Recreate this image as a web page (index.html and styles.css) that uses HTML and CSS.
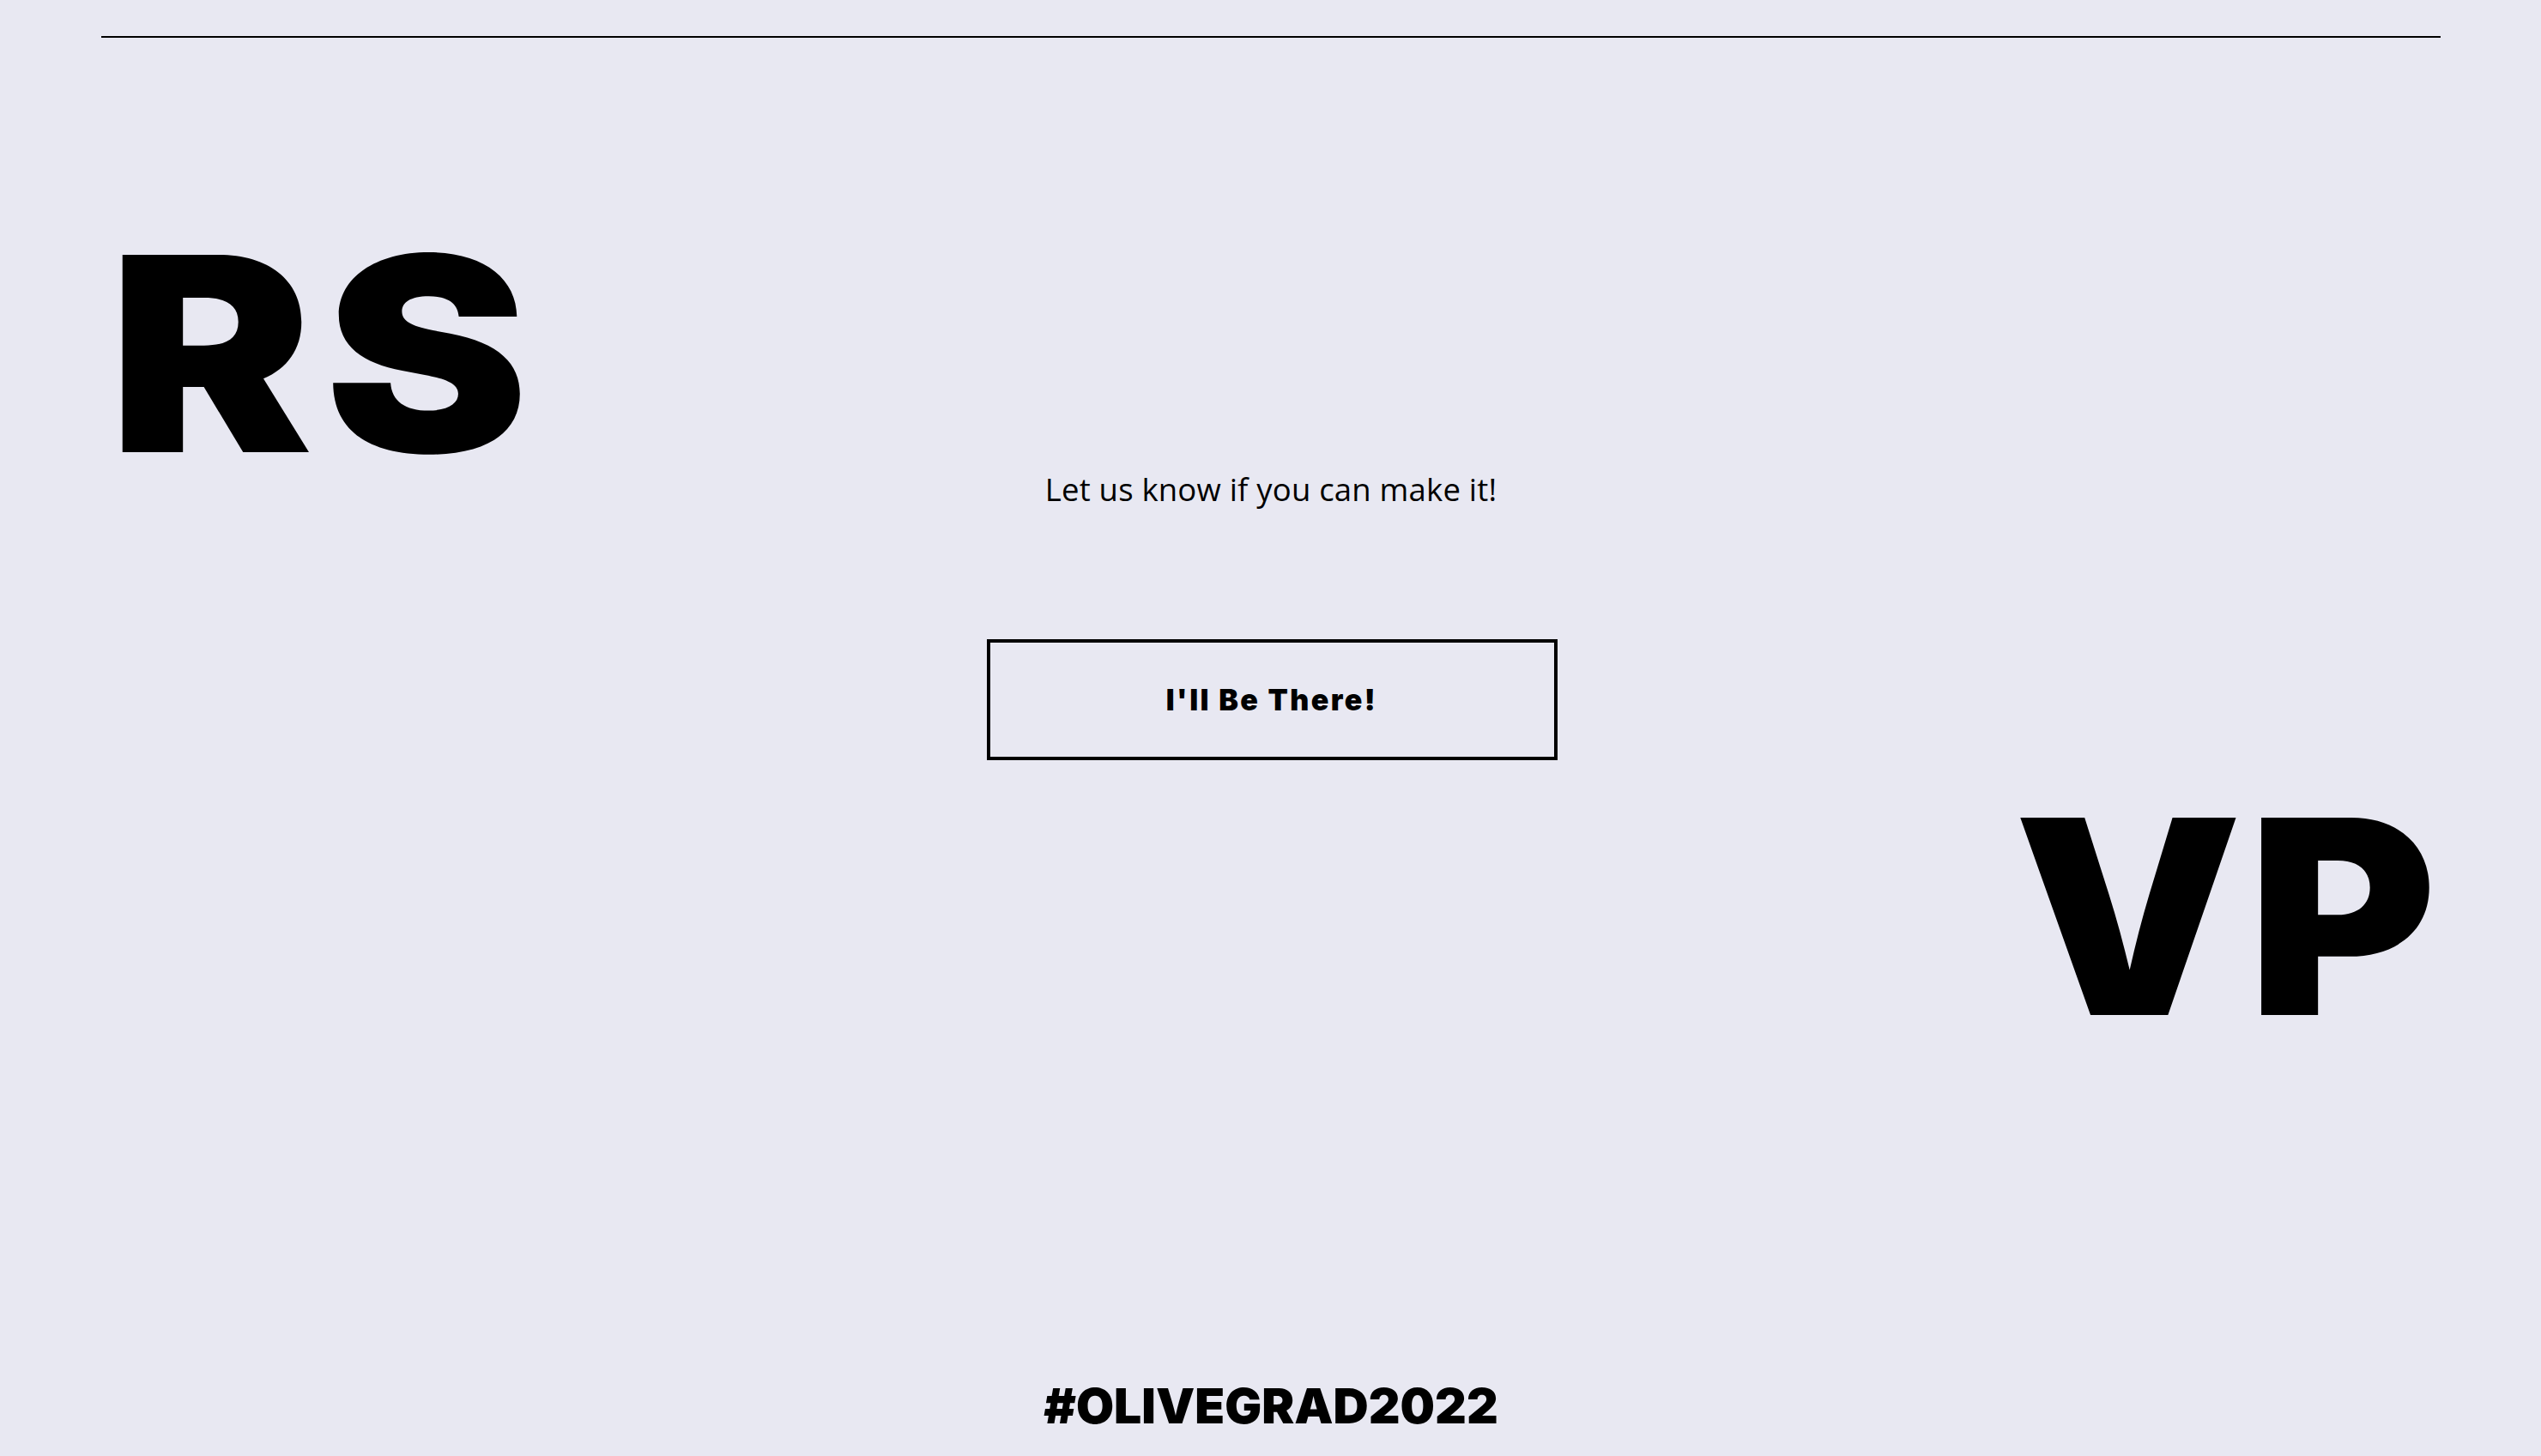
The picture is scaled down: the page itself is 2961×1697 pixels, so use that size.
FILE: index.html
```html
<!DOCTYPE html>
<html lang="en">
<head>
<meta charset="utf-8">
<title>RSVP</title>
<link rel="stylesheet" href="styles.css">
</head>
<body>
<div class="page">
  <hr class="rule">
  <section class="rsvp">
    <div class="big big-left"><span class="big-text">RS</span></div>
    <p class="lead">Let us know if you can make it!</p>
    <div class="actions"><button class="btn" type="button">I'll Be There!</button></div>
    <div class="big big-right"><span class="big-text">VP</span></div>
  </section>
  <footer class="footer">#OLIVEGRAD2022</footer>
</div>
</body>
</html>
```

FILE: styles.css
```css
html, body {
  margin: 0;
  padding: 0;
  background: #e8e8f2;
  color: #000;
}
.page {
  width: 2961px;
  height: 1697px;
  overflow: hidden;
  padding: 42px 117px 28px 118px;
  box-sizing: border-box;
  display: flex;
  flex-direction: column;
}
.rule {
  margin: 0;
  border: 0;
  border-top: 2px solid #000;
  height: 0;
  flex: none;
}
.rsvp {
  display: flex;
  flex-direction: column;
}
.big {
  font-family: Inter, "Liberation Sans", sans-serif;
  font-weight: 900;
  font-size: 316px;
  line-height: 0.8;
}
.big-text {
  display: inline-block;
  letter-spacing: 12px;
}
.big-left {
  margin-top: 242px;
  margin-left: 8px;
  text-align: left;
}
.big-left .big-text {
  transform: scaleX(1.13);
  transform-origin: left center;
}
.big-right {
  margin-top: 56px;
  margin-right: -2px;
  text-align: right;
}
.big-right .big-text {
  letter-spacing: 6px;
  transform: scaleX(1.06);
  transform-origin: right center;
}
.lead {
  margin: 11px 0 0;
  text-align: center;
  font-family: "Open Sans", Lato, sans-serif;
  font-size: 36.5px;
  letter-spacing: 0.2px;
  line-height: 40px;
}
.actions {
  display: flex;
  justify-content: center;
  margin-top: 155px;
}
.btn {
  width: 665px;
  height: 141px;
  border: 4px solid #000;
  background: transparent;
  color: #000;
  font-family: Inter, "Liberation Sans", sans-serif;
  font-weight: 900;
  font-size: 34px;
  letter-spacing: 2.4px;
  padding: 0;
  margin-left: 2px;
}
.footer {
  margin-top: auto;
  text-align: center;
  font-family: Inter, "Liberation Sans", sans-serif;
  font-weight: 900;
  font-size: 57px;
  line-height: 60px;
}
```
